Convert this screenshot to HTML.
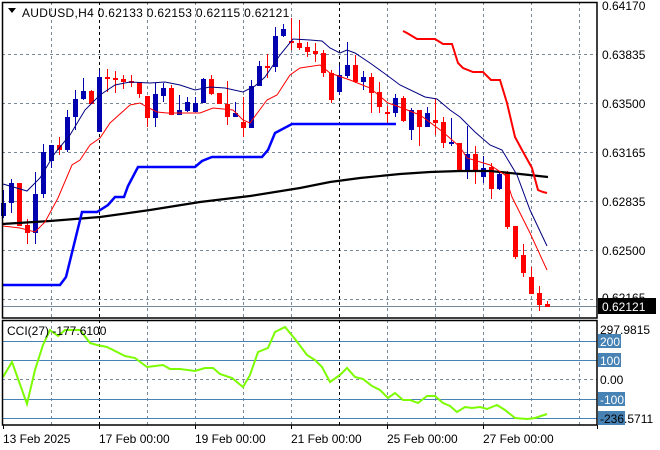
<!DOCTYPE html>
<html><head><meta charset="utf-8"><style>
html,body{margin:0;padding:0;background:#fff;width:660px;height:450px;overflow:hidden}
svg{display:block;font-family:"Liberation Sans",sans-serif}
</style></head><body>
<svg id="s" width="660" height="450" viewBox="0 0 660 450" xmlns="http://www.w3.org/2000/svg">
<rect width="660" height="450" fill="#fff"/>
<g stroke="#778899" stroke-width="1" stroke-dasharray="3,3" fill="none">
<path d="M2 54.5H597M2 103.5H597M2 152.5H597M2 201.5H597M2 250.5H597M2 299.5H597"/>
<path d="M51.5 2V318M147.5 2V318M195.5 2V318M243.5 2V318M291.5 2V318M387.5 2V318M435.5 2V318M483.5 2V318M531.5 2V318M579.5 2V318"/>
<path d="M51.5 320V425M147.5 320V425M195.5 320V425M243.5 320V425M291.5 320V425M387.5 320V425M435.5 320V425M483.5 320V425M531.5 320V425M579.5 320V425"/>
<path d="M2 379.5H597"/>
</g>
<g stroke="#000" stroke-width="1" stroke-dasharray="3,3"><path d="M99.5 2V318M339.5 2V318M99.5 320V425M339.5 320V425"/></g>
<g stroke="#4682b4" stroke-width="1"><path d="M2 341.5H597M2 360.5H597M2 399.5H597M2 418.5H597"/></g>
<path d="M2 306.5H597" stroke="#778899"/>
<g id="c"></g>
<polyline fill="none" stroke="#000" stroke-width="2.2" points="2,224 50,221 100,217 150,210 200,202 250,196 300,188 330,182 360,178 400,174 430,172 460,171 490,171 520,174 548,177"/>
<polyline fill="none" stroke="#0000ff" stroke-width="2.5" points="2,285 60,285 66,277 82,212 97,212 108,205 115,197 124,197 128,186 138,167 195,167 202,161 212,157 262,157 268,150 275,133 292,124 396,124"/>
<polyline fill="none" stroke="#000080" stroke-width="1" points="3,184 27,191 40,178 55,153 70,135 85,110 100,95 115,85 130,82 150,83 165,82 180,85 195,90 210,87 225,88 243,92 255,86 265,77 280,55 293,39 310,40 322,41 330,48 340,53 347,50 355,53 370,63 388,76 400,85 425,97 437,99 450,110 460,117 475,132 490,145 502,150 517,175 530,210 547,246"/>
<polyline fill="none" stroke="#ff0000" stroke-width="1" points="3,226 20,228 35,232 45,222 58,198 72,165 80,160 90,145 100,138 110,123 130,105 140,103 147,107 157,112 167,113 187,113 200,113 213,108 233,110 243,120 250,123 267,100 277,95 290,75 300,68 320,65 330,73 350,80 370,88 388,103 397,106 420,115 443,132 460,147 467,158 490,165 505,175 512,197 530,233 547,270"/>
<polyline fill="none" stroke="#ff0000" stroke-width="2" points="403,31 407,33 417,39 435,39 443,44 452,44 458,63 463,68 473,72 483,72 491,80 500,80 507,103 515,137 522,150 532,168 538,190 543,192 547,193"/>
<polyline fill="none" stroke="#7cfc00" stroke-width="2" points="3,377 12,362 27,404 35,370 43,345 50,330 58,336 65,330 72,330 80,330 90,343 97,345 107,347 117,352 125,356 135,358 147,367 155,366 163,365 170,369 180,369 195,371 205,368 213,368 220,374 232,378 243,387 250,375 258,352 268,348 275,332 285,327 295,339 307,355 315,360 322,367 330,382 340,375 347,368 355,377 363,379 372,386 380,390 388,398 395,393 403,400 410,400 418,403 427,396 435,396 443,403 450,406 457,412 465,407 472,408 480,407 487,409 497,405 505,410 515,418 527,419 535,418 547,414"/>
<g fill="none" stroke="#000" stroke-width="1.5"><rect x="2.5" y="2.5" width="594.5" height="315.5"/><rect x="2.5" y="320.5" width="594.5" height="104.5"/></g>
<path d="M8 8h8l-4 5z" fill="#000"/>
<text x="22" y="17" font-size="12" letter-spacing="0.3" fill="#000">AUDUSD,H4  0.62133 0.62153 0.62115 0.62121</text>
<text x="7" y="335" font-size="12" fill="#000">CCI(27) -177.6100</text>
<g font-size="12" fill="#000">
<text x="602" y="10">0.64170</text><text x="602" y="59">0.63835</text><text x="602" y="108">0.63500</text><text x="602" y="157">0.63165</text><text x="602" y="206">0.62835</text><text x="602" y="255">0.62500</text><text x="602" y="302">0.62165</text>
</g>
<rect x="598" y="298" width="58" height="16" fill="#000"/><text x="602" y="311" font-size="12" fill="#fff">0.62121</text>
<g font-size="12">
<text x="600" y="334" fill="#000">297.9815</text>
<rect x="598" y="334" width="23" height="14" fill="#4682b4"/><text x="600" y="346" fill="#fff">200</text>
<rect x="598" y="353" width="23" height="14" fill="#4682b4"/><text x="600" y="365" fill="#fff">100</text>
<text x="600" y="384" fill="#000">0.00</text>
<rect x="598" y="392" width="27" height="14" fill="#4682b4"/><text x="600" y="404" fill="#fff">-100</text>
<rect x="598" y="411" width="27" height="14" fill="#4682b4"/><text x="600" y="423" fill="#000">-236.5711</text>
</g>
<g stroke="#000"><path d="M3.5 425v4M99.5 425v4M195.5 425v4M291.5 425v4M387.5 425v4M483.5 425v4M597.5 425v4"/></g>
<g font-size="12" fill="#000">
<text x="3" y="443">13 Feb 2025</text><text x="99" y="443">17 Feb 00:00</text><text x="195" y="443">19 Feb 00:00</text><text x="291" y="443">21 Feb 00:00</text><text x="387" y="443">25 Feb 00:00</text><text x="483" y="443">27 Feb 00:00</text>
</g>
</svg>
<script>
var d=[
[3,'b',203,216,190,218],[11,'b',183,203,179,213],[19,'r',183,226,183,226],[27,'r',225,233,219,244],[35,'b',194,233,172,244],
[43,'b',152,194,144,198],[51,'b',145,161,145,168],[59,'r',145,150,137,155],[67,'b',117,150,110,152],[75,'b',99,117,90,130],
[83,'b',91,99,78,100],[91,'r',91,104,90,104],[99,'b',77,132,70,132],[107,'r',77,79,69,92],[115,'r',78,80,71,93],
[123,'r',79,82,75,89],[131,'r',81,83,75,87],[139,'r',82,94,82,98],[147,'r',96,118,96,127],[155,'b',94,118,83,127],
[163,'b',88,96,83,102],[171,'r',88,115,85,115],[179,'b',110,115,95,115],[187,'b',102,111,97,112],[195,'b',103,112,97,112],
[203,'b',79,103,78,103],[211,'r',79,94,75,95],[219,'r',93,104,93,104],[227,'r',104,117,81,125],[235,'b',113,117,102,117],
[243,'r',122,128,97,137],[251,'b',86,128,80,128],[259,'b',66,86,61,86],[267,'r',66,68,54,78],[275,'b',36,67,27,72],
[283,'b',29,36,24,37],[291,'r',41,43,18,50],[299,'r',43,48,20,50],[307,'r',47,52,42,57],[315,'r',51,54,43,62],
[323,'r',53,73,50,77],[331,'r',73,100,70,103],[339,'b',75,92,65,95],[347,'b',65,76,42,78],[355,'r',65,82,55,83],
[363,'b',77,82,71,90],[371,'r',77,93,73,113],[379,'r',92,107,82,113],[387,'r',112,114,106,124],[395,'b',98,113,94,117],
[403,'r',98,121,96,122],[411,'b',110,130,108,140],[419,'r',110,127,110,146],[427,'b',113,127,107,127],[435,'r',120,123,98,135],
[443,'r',122,143,117,148],[451,'b',142,144,118,146],[459,'r',143,171,143,171],[467,'b',154,171,126,179],[475,'r',154,171,146,184],
[483,'b',168,177,156,183],[491,'r',167,189,163,199],[499,'b',174,189,172,190],[507,'r',173,227,171,229],[515,'r',226,257,226,259],
[523,'r',255,273,244,277],[531,'r',277,294,267,294],[539,'r',293,305,286,311],[547,'r',304,307,301,307]];
var g=document.getElementById('c'),h='';
d.forEach(function(c){var col=c[1]=='b'?'#0000b0':'#ff0000';var x=c[0];
h+='<line x1="'+(x+.5)+'" x2="'+(x+.5)+'" y1="'+c[4]+'" y2="'+c[5]+'" stroke="'+col+'" stroke-width="1"/>';
h+='<rect x="'+(x-2)+'" y="'+c[2]+'" width="5" height="'+Math.max(2,c[3]-c[2])+'" fill="'+col+'"/>';});
g.innerHTML=h;
</script>
</body></html>
